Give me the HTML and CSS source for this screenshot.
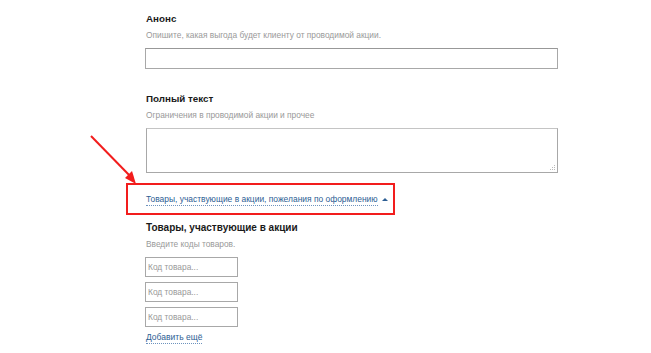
FILE: index.html
```html
<!DOCTYPE html>
<html>
<head>
<meta charset="utf-8">
<link rel="stylesheet" href="styles.css">
</head>
<body>
<div class="page">
  <div class="field">
    <div class="label">Анонс</div>
    <div class="hint">Опишите, какая выгода будет клиенту от проводимой акции.</div>
    <div class="input"></div>
  </div>
  <div class="field field-full">
    <div class="label">Полный текст</div>
    <div class="hint">Ограничения в проводимой акции и прочее</div>
    <div class="textarea">
      <svg class="grip" width="6" height="6" viewBox="0 0 6 6"><rect x="4" y="0" width="1" height="1" fill="#bbb"/><rect x="2" y="2" width="1" height="1" fill="#bbb"/><rect x="4" y="2" width="1" height="1" fill="#bbb"/><rect x="0" y="4" width="1" height="1" fill="#bbb"/><rect x="2" y="4" width="1" height="1" fill="#bbb"/><rect x="4" y="4" width="1" height="1" fill="#bbb"/></svg>
    </div>
  </div>
  <div class="highlight">
    <span class="toggle">Товары, участвующие в акции, пожелания по оформлению</span><span class="caret"></span>
    <svg class="arrow" width="60" height="60" viewBox="0 0 60 60">
      <line x1="2" y1="2" x2="43" y2="44" stroke="#f21d1d" stroke-width="2"/>
      <polygon points="47,50 36,44 43,37" fill="#f21d1d"/>
    </svg>
  </div>
  <div class="field field-goods">
    <div class="label">Товары, участвующие в акции</div>
    <div class="hint">Введите коды товаров.</div>
    <div class="codes">
      <div class="code">Код товара...</div>
      <div class="code">Код товара...</div>
      <div class="code">Код товара...</div>
    </div>
    <span class="add">Добавить ещё</span>
  </div>
</div>
</body>
</html>
```
FILE: styles.css
```css
html, body {
  margin: 0;
  padding: 0;
  background: #fff;
}
body {
  font-family: "Liberation Sans", Arial, sans-serif;
  font-size: 9px;
  color: #222;
}
.page {
  padding: 12px 0 0 146px;
  width: 412px;
}
.label {
  font-weight: bold;
  font-size: 9.8px;
  line-height: 14px;
  color: #1a1a1a;
}
.hint {
  margin-top: 3px;
  line-height: 12px;
  color: #999;
  font-size: 8.35px;
}
.input {
  margin-top: 7px;
  margin-left: -1px;
  height: 19px;
  border: 1px solid #a8a8a8;
  border-top-color: #989898;
}
.field-full {
  margin-top: 23px;
}
.textarea {
  position: relative;
  margin-top: 7px;
  height: 43px;
  border: 1px solid #a8a8a8;
  border-top-color: #c4c4c4;
}
.grip {
  position: absolute;
  right: 1px;
  bottom: 1px;
}
.highlight {
  position: relative;
  margin: 10px 0 0 -20px;
  width: fit-content;
  height: 28px;
  border: 2px solid #f21d1d;
  padding-left: 18px;
  padding-right: 5px;
  display: flex;
  align-items: center;
  white-space: nowrap;
}
.toggle {
  font-size: 8.45px;
  color: #2d5e94;
  line-height: 12px;
  border-bottom: 1px dotted #6e93bd;
}
.caret {
  margin-left: 4px;
  width: 0;
  height: 0;
  border-left: 3px solid transparent;
  border-right: 3px solid transparent;
  border-bottom: 3px solid #2d5e94;
}
.arrow {
  position: absolute;
  left: -39px;
  top: -51px;
}
.field-goods {
  margin-top: 6px;
}
.field-goods .label {
  font-size: 10px;
}
.codes {
  margin-top: 7px;
  display: flex;
  flex-direction: column;
  gap: 5px;
  margin-left: -1px;
}
.code {
  width: 89px;
  height: 18px;
  border: 1px solid #a8a8a8;
  color: #999;
  font-size: 8.4px;
  line-height: 18px;
  padding-left: 2px;
}
.add {
  display: inline-block;
  margin-top: 5px;
  color: #2d5e94;
  font-size: 8.5px;
  line-height: 11px;
  border-bottom: 1px dotted #6e93bd;
}
```
